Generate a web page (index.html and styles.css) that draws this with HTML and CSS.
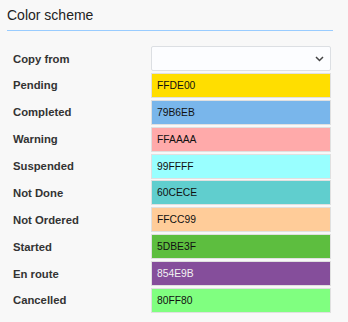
FILE: index.html
```html
<!DOCTYPE html>
<html lang="en">
<head>
    <meta charset="UTF-8">
    <meta name="viewport" content="width=device-width, initial-scale=1.0">
    <title>Color scheme</title>
    <link rel="stylesheet" href="styles.css">
</head>
<body>
    <div class="panel">
        <h2 class="title">Color scheme</h2>

        <div class="fields">
            <label>Copy from</label>
            <div class="select">
                <span></span>
                <svg width="9" height="6" viewBox="0 0 9 6"><path d="M1 1l3.5 3.5L8 1" fill="none" stroke="#444" stroke-width="1.5"/></svg>
            </div>

            <label>Pending</label>
            <div class="swatch" style="background:#FFDE00">FFDE00</div>

            <label>Completed</label>
            <div class="swatch" style="background:#79B6EB">79B6EB</div>

            <label>Warning</label>
            <div class="swatch" style="background:#FFAAAA">FFAAAA</div>

            <label>Suspended</label>
            <div class="swatch" style="background:#99FFFF">99FFFF</div>

            <label>Not Done</label>
            <div class="swatch" style="background:#60CECE">60CECE</div>

            <label>Not Ordered</label>
            <div class="swatch" style="background:#FFCC99">FFCC99</div>

            <label>Started</label>
            <div class="swatch" style="background:#5DBE3F">5DBE3F</div>

            <label>En route</label>
            <div class="swatch light" style="background:#854E9B">854E9B</div>

            <label>Cancelled</label>
            <div class="swatch" style="background:#80FF80">80FF80</div>
        </div>
    </div>
</body>
</html>
```

FILE: styles.css
```css
*{
    margin: 0;
    padding: 0;
    box-sizing: border-box;
}
body{
    background-color: #f8f8f8;
    font-family: "Liberation Sans", Arial, sans-serif;
    color: #333;
}
.panel{
    width: 326px;
    margin-left: 7px;
    padding-top: 7px;
}
.title{
    font-size: 14px;
    font-weight: normal;
    line-height: 16px;
    color: #222;
    padding-bottom: 7px;
    border-bottom: 1px solid #99ccff;
}
.fields{
    display: grid;
    grid-template-columns: 138px 180px;
    grid-auto-rows: 25px;
    row-gap: 1.875px;
    padding-left: 6px;
    margin-top: 15px;
}
.fields label{
    display: flex;
    align-items: center;
    font-size: 11.3px;
    font-weight: bold;
    color: #333;
}
.select{
    display: flex;
    justify-content: space-between;
    align-items: center;
    background-color: #fcfdff;
    border: 1px solid #dcdfe3;
    border-radius: 2px;
    padding: 0 6px 0 5px;
}
.swatch{
    display: flex;
    align-items: center;
    border: 1px solid #e0e0e0;
    padding-left: 5px;
    font-size: 10.3px;
    color: #111;
}
.swatch.light{
    color: #f2f2f2;
}
```
